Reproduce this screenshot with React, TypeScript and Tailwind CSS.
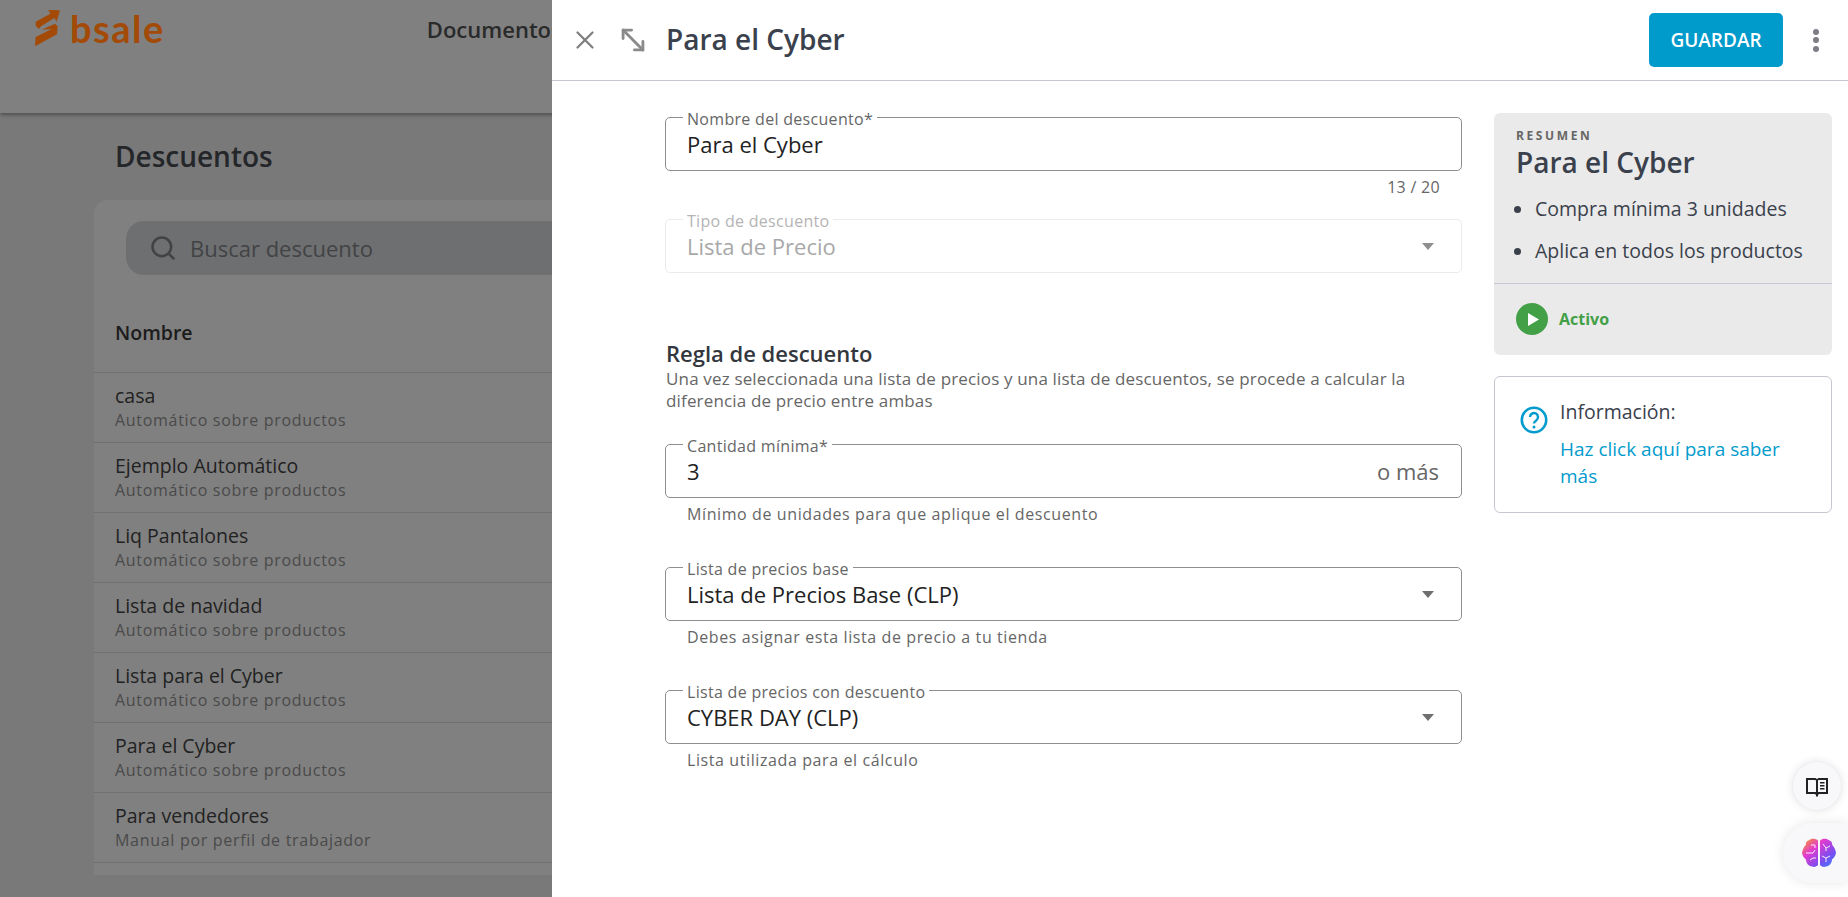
import { MoveDiagonal2, Search, X } from "lucide-react";

const font = "font-['Open_Sans',sans-serif]";

const discounts = [
  { name: "casa", type: "Automático sobre productos" },
  { name: "Ejemplo Automático", type: "Automático sobre productos" },
  { name: "Liq Pantalones", type: "Automático sobre productos" },
  { name: "Lista de navidad", type: "Automático sobre productos" },
  { name: "Lista para el Cyber", type: "Automático sobre productos" },
  { name: "Para el Cyber", type: "Automático sobre productos" },
  { name: "Para vendedores", type: "Manual por perfil de trabajador" },
];

function Caret({ disabled }: { disabled?: boolean }) {
  return (
    <span
      className={`w-0 h-0 border-x-[6.5px] border-x-transparent border-t-[7px] ${
        disabled ? "border-t-[#8f8f8f]" : "border-t-[#6f6f6f]"
      }`}
    />
  );
}

function Field({
  label,
  value,
  disabled,
  select,
  suffix,
}: {
  label: string;
  value: string;
  disabled?: boolean;
  select?: boolean;
  suffix?: string;
}) {
  return (
    <div
      className={`relative h-[54px] rounded-[5px] border flex items-center justify-between pl-[21px] pr-[22px] ${
        disabled ? "border-[#ebebeb]" : "border-[#8e8e8e]"
      }`}
    >
      <span
        className={`absolute left-[17px] -top-[9px] h-5 bg-white px-1 text-[16px] leading-5 tracking-[0.3px] ${
          disabled ? "text-[#b4b4b4]" : "text-[#666666]"
        }`}
      >
        {label}
      </span>
      <span className={`text-[22px] ${disabled ? "text-[#a8a8a8]" : "text-[#222222]"}`}>{value}</span>
      {select && (
        <span className="pr-[5px] flex">
          <Caret disabled={disabled} />
        </span>
      )}
      {suffix && <span className="text-[22px] text-[#666666]">{suffix}</span>}
    </div>
  );
}

function Help({ children }: { children: string }) {
  return <p className="mt-[6px] pl-[22px] text-[16px] leading-5 tracking-[0.6px] text-[#666666]">{children}</p>;
}

function Background() {
  return (
    <div className="h-full bg-[#797979]">
      <header className="h-[113px] bg-[#808080] shadow-[0_2px_4px_rgba(0,0,0,0.35)] flex items-start">
        <div className="ml-[35px] mt-[9px] flex items-start gap-[9px]">
          <svg viewBox="30 28 78 114" className="w-[26px] h-[38px]" fill="#a34a07">
            <path d="M32 66 76 42 70 31 105 32 95 66 88 55 48 80 42 88 32 78Z" />
            <path d="M50 90 90 72 98 80 96 104 30 140 32 112 80 88Z" />
          </svg>
          <span className="font-['Lato',sans-serif] font-bold text-[38px] leading-[38px] tracking-[1.5px] text-[#a34a07]">
            bsale
          </span>
        </div>
        <span className="ml-[262px] mt-[13px] text-[22px] font-semibold text-[#2a2a2a]">Documentos</span>
      </header>
      <main className="pl-[94px]">
        <h1 className="ml-[21px] mt-[26px] h-[34px] text-[28px] leading-[34px] font-semibold text-[#24262a]">
          Descuentos
        </h1>
        <div className="mt-[27px] h-[675px] rounded-tl-[14px] bg-[#808080]">
          <div className="ml-8 pt-[21px]">
            <div className="h-[54px] rounded-l-[18px] bg-[#6e6f71] flex items-center pl-[23px] gap-[13px] text-[#424345]">
              <Search size={28} strokeWidth={2.2} />
              <span className="text-[22px]">Buscar descuento</span>
            </div>
          </div>
          <div className="h-[98px] border-b border-[#707070] pl-[21px] pt-[46px] text-[19.5px] leading-6 font-semibold text-[#1c1c1c]">
            Nombre
          </div>
          {discounts.map((d) => (
            <div key={d.name} className="h-[70px] border-b border-[#707070] pl-[21px] pt-[11px]">
              <div className="text-[19.5px] leading-6 text-[#222222]">{d.name}</div>
              <div className="mt-[2px] text-[16px] leading-5 tracking-[0.7px] text-[#4a4a4a]">{d.type}</div>
            </div>
          ))}
        </div>
      </main>
    </div>
  );
}

function Drawer() {
  return (
    <aside className="absolute inset-y-0 right-0 w-[1296px] bg-white flex flex-col">
      <div className="h-[81px] shrink-0 border-b border-[#c8c6d0] flex items-center pl-[18px] pr-[29px]">
        <X size={30} strokeWidth={1.8} className="text-[#7f7f7f]" />
        <MoveDiagonal2 size={34} strokeWidth={2} className="ml-4 text-[#8a8a8a]" />
        <h2 className="ml-[16px] -mt-[2px] text-[28px] font-semibold text-[#3a414c]">Para el Cyber</h2>
        <button className="ml-auto h-[54px] w-[134px] rounded-[5px] bg-[#009acb] text-[19px] font-semibold text-white">
          GUARDAR
        </button>
        <div className="ml-[30px] flex flex-col gap-[2.5px]">
          <span className="w-[6px] h-[6px] rounded-full bg-[#7d7d85]" />
          <span className="w-[6px] h-[6px] rounded-full bg-[#7d7d85]" />
          <span className="w-[6px] h-[6px] rounded-full bg-[#7d7d85]" />
        </div>
      </div>

      <div className="flex pl-[113px] pr-4">
        <form className="w-[797px] pt-9">
          <Field label="Nombre del descuento*" value="Para el Cyber" />
          <p className="mt-[6px] pr-[22px] text-right text-[16px] leading-5 tracking-[0.3px] text-[#666666]">13 / 20</p>
          <div className="mt-[22px]">
            <Field label="Tipo de descuento" value="Lista de Precio" select disabled />
          </div>

          <h3 className="ml-px mt-[66px] text-[22px] leading-7 font-semibold text-[#33373d]">Regla de descuento</h3>
          <p className="ml-px mt-px text-[17px] leading-[22px] tracking-[0.16px] text-[#666666]">
            Una vez seleccionada una lista de precios y una lista de descuentos, se procede a calcular la
            <br />
            diferencia de precio entre ambas
          </p>

          <div className="mt-8">
            <Field label="Cantidad mínima*" value="3" suffix="o más" />
            <Help>Mínimo de unidades para que aplique el descuento</Help>
          </div>
          <div className="mt-[43px]">
            <Field label="Lista de precios base" value="Lista de Precios Base (CLP)" select />
            <Help>Debes asignar esta lista de precio a tu tienda</Help>
          </div>
          <div className="mt-[43px]">
            <Field label="Lista de precios con descuento" value="CYBER DAY (CLP)" select />
            <Help>Lista utilizada para el cálculo</Help>
          </div>
        </form>

        <div className="ml-8 w-[338px] pt-8">
          <section className="h-[242px] rounded-[6px] bg-[#eaeaea]">
            <div className="pl-[22px] pt-[15px]">
              <p className="text-[12px] leading-4 font-bold tracking-[2.6px] text-[#666666]">RESUMEN</p>
              <p className="mt-[2px] text-[28px] leading-8 font-semibold text-[#3a414c]">Para el Cyber</p>
            </div>
            <ul className="mt-[19px] flex flex-col gap-[18px] pl-[20px] text-[19.5px] leading-6 text-[#3a414c]">
              <li className="flex items-center gap-[14px]">
                <span className="w-[7px] h-[7px] rounded-full bg-[#3a414c]" />
                Compra mínima 3 unidades
              </li>
              <li className="flex items-center gap-[14px]">
                <span className="w-[7px] h-[7px] rounded-full bg-[#3a414c]" />
                Aplica en todos los productos
              </li>
            </ul>
            <div className="mt-5 h-[71px] border-t border-[#c8c6d0] flex items-center pl-[22px] gap-[11px]">
              <span className="w-8 h-8 rounded-full bg-[#43a047] flex items-center justify-center">
                <svg viewBox="0 0 12 14" className="w-[11px] h-[13px] ml-[2px]" fill="#ffffff">
                  <path d="M0 0 12 7 0 14Z" />
                </svg>
              </span>
              <span className="text-[16px] font-bold text-[#43a047]">Activo</span>
            </div>
          </section>

          <section className="mt-[21px] h-[137px] rounded-[6px] border border-[#c8c6d0] flex pl-[25px] pt-[21px]">
            <svg viewBox="0 0 28 28" className="w-7 h-7 mt-[8px] shrink-0" fill="none" stroke="#039bcd">
              <circle cx="14" cy="14" r="12.2" strokeWidth="2.6" />
              <path d="M10 11a4 4 0 1 1 6.2 3.4c-1.4.9-2.2 1.6-2.2 3.1" strokeWidth="2.4" />
              <circle cx="14" cy="21" r="1.5" fill="#039bcd" stroke="none" />
            </svg>
            <div className="ml-3 w-[232px] leading-[27px]">
              <p className="text-[19.5px] text-[#3a414c]">Información:</p>
              <p className="mt-[11px] text-[19px] text-[#039bcd]">Haz click aquí para saber más</p>
            </div>
          </section>
        </div>
      </div>

      <button className="absolute right-[6px] top-[761px] w-[50px] h-[50px] rounded-full bg-[#f8f8fa] border border-[#eeeef2] shadow-[0_0_8px_rgba(0,0,0,0.1)] flex items-center justify-center">
        <svg viewBox="0 0 24 24" className="w-6 h-6" fill="#222222">
          <path d="M1 4h8.500c1.200 0 2 .5 2.500 1.200C12.500 4.500 13.300 4 14.500 4H23v16h-9l-1 1v1.500h-2V21l-1-1H1Zm2 2v12h8V7c0-.6-.5-1-1.500-1Zm11 0c-.7 0-1 .4-1 1v11h8V6Z" />
          <path d="M15 8h4.500v1.500H15Zm0 3h4.500v1.500H15Zm0 3h4.500v1.500H15Z" />
        </svg>
      </button>
      <button className="absolute right-0 top-[823px] w-[65px] h-[60px] rounded-l-[30px] bg-[#f8f8fa] shadow-[0_0_12px_rgba(0,0,0,0.1)] flex items-center pl-[19px]">
        <svg viewBox="0 0 34 30" className="w-[34px] h-[30px]">
          <defs>
            <linearGradient id="brain" x1="0" y1="0" x2="1" y2="1">
              <stop offset="0" stopColor="#f9a11b" />
              <stop offset="0.35" stopColor="#e23bd0" />
              <stop offset="0.7" stopColor="#7a4df0" />
              <stop offset="1" stopColor="#2f8bff" />
            </linearGradient>
          </defs>
          <path
            fill="url(#brain)"
            d="M16 2.500C14 .5 9.500 0 7.500 2 5 2.500 3.500 4.500 3.800 7 1.500 9 .5 12 0 15c.5 3 2 5 4 6.500 0 3.500 2.500 6.500 6 7 2.500 1 4.800 0 6-1.500ZM18 2.500c2-2 6.500-2.500 8.500-.5 2.500.5 4 2.500 3.700 5 2.300 2 3.300 5 3.800 8-.5 3-2 5-4 6.500 0 3.500-2.500 6.500-6 7-2.500 1-4.800 0-6-1.500Z"
          />
          <path
            fill="none"
            stroke="#ffffff"
            strokeWidth="0.900"
            d="M4 15h7l2-3M9 7h4v3M8 22l3-2h3M21 6l3 4 4-2M24 10v3M20 18l4 2 4-2M24 20v4"
          />
        </svg>
      </button>
    </aside>
  );
}

export default function App() {
  return (
    <div className={`relative h-screen w-full overflow-hidden ${font}`}>
      <Background />
      <Drawer />
    </div>
  );
}
